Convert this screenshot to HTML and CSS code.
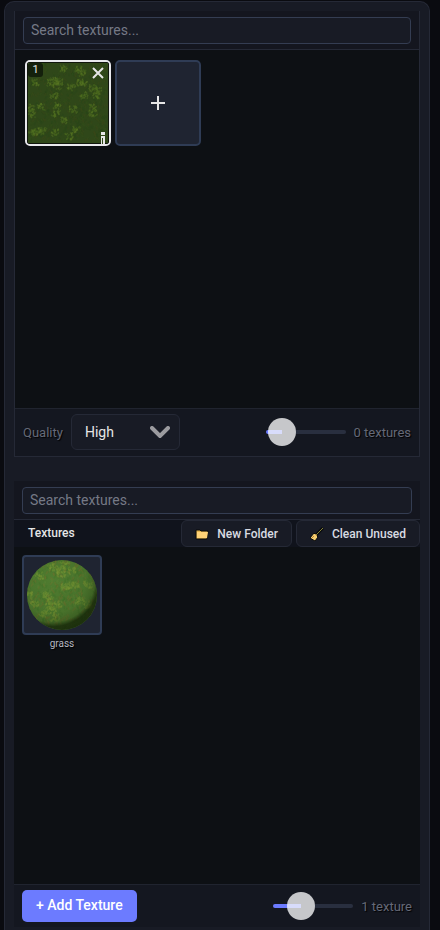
FILE: index.html
```html
<!DOCTYPE html>
<html lang="en">
<head>
    <meta charset="UTF-8">
    <meta name="viewport" content="width=device-width, initial-scale=1.0">
    <title>Textures</title>
    <link rel="stylesheet" href="styles.css">
</head>
<body>
    <main class="panel">
        <section class="browser framed">
            <div class="search-bar">
                <input class="search" type="text" placeholder="Search textures..." aria-label="Search terrain textures">
            </div>
            <div class="tiles">
                <div class="tile selected">
                    <svg class="grass" id="grass-tile" viewBox="0 0 86 86" aria-hidden="true">
                        <rect width="86" height="86" fill="#2f4719"/>
                        <g class="tufts"></g>
                    </svg>
                    <span class="badge">1</span>
                    <button class="remove" aria-label="Remove texture">
                        <svg viewBox="0 0 12 12" width="12" height="12"><path d="M1 1L11 11M11 1L1 11" stroke="#e6e6e6" stroke-width="2"/></svg>
                    </button>
                    <svg class="info" viewBox="0 0 6 14" width="6" height="14" aria-hidden="true">
                        <path d="M1 0h4v3h-4zM1 4h4v10h-4z" fill="#e8e8e8"/>
                        <path d="M2 6h1v8h-1z" fill="#2f4719"/>
                    </svg>
                </div>
                <button class="tile add" aria-label="Add texture slot">
                    <svg viewBox="0 0 14 14" width="14" height="14"><path d="M7 0V14M0 7H14" stroke="#e6e6e6" stroke-width="2"/></svg>
                </button>
            </div>
            <div class="footer">
                <label class="muted" for="quality">Quality</label>
                <div class="select-wrap">
                    <select class="quality" id="quality">
                        <option>Low</option>
                        <option>Medium</option>
                        <option selected>High</option>
                    </select>
                    <svg class="chevron" viewBox="0 0 20 12" width="20" height="12" aria-hidden="true"><path d="M2 2L10 10L18 2" fill="none" stroke="#9b9b9f" stroke-width="4" stroke-linecap="round"/></svg>
                </div>
                <input class="size low" type="range" min="0" max="100" value="4" aria-label="Tile size">
                <span class="muted">0 textures</span>
            </div>
        </section>

        <section class="browser">
            <div class="search-bar">
                <input class="search" type="text" placeholder="Search textures..." aria-label="Search texture library">
            </div>
            <div class="toolbar">
                <h2 class="title">Textures</h2>
                <button class="tool">
                    <svg viewBox="0 0 14 12" width="14" height="12" aria-hidden="true">
                        <path d="M1 2h4l1 1h7l-1 8h-11z" fill="#e8b64c" stroke="#080a0c" stroke-width="1"/>
                        <path d="M2 4h11l-1 6h-10z" fill="#ffd277"/>
                    </svg>
                    New Folder
                </button>
                <button class="tool">
                    <svg viewBox="0 0 14 14" width="14" height="14" aria-hidden="true">
                        <path d="M6 8L13 1" stroke="#080a0c" stroke-width="3"/>
                        <path d="M6 8L13 1" stroke="#85823a" stroke-width="1"/>
                        <path d="M4 6l4 4-3 4-5-3z" fill="#f6cf72" stroke="#080a0c" stroke-width="1"/>
                        <path d="M2 11l2-2M5 7l2 2" stroke="#b98634" stroke-width="1"/>
                    </svg>
                    Clean Unused
                </button>
            </div>
            <div class="tiles library">
                <figure class="item">
                    <div class="thumb">
                        <svg class="ball" id="grass-ball" viewBox="0 0 70 70" width="70" height="70" aria-hidden="true">
                            <defs>
                                <clipPath id="round"><circle cx="35" cy="35" r="35"/></clipPath>
                                <radialGradient id="shade" cx="0.36" cy="0.28" r="0.8">
                                    <stop offset="0" stop-color="#0a1400" stop-opacity="0"/>
                                    <stop offset="0.6" stop-color="#0a1400" stop-opacity="0.1"/>
                                    <stop offset="0.76" stop-color="#0a1400" stop-opacity="0.25"/>
                                    <stop offset="0.84" stop-color="#0a1400" stop-opacity="0.7"/>
                                    <stop offset="1" stop-color="#0a1400" stop-opacity="0.75"/>
                                </radialGradient>
                            </defs>
                            <g clip-path="url(#round)">
                                <rect width="70" height="70" fill="#4f7c30"/>
                                <g class="tufts"></g>
                                <rect width="70" height="70" fill="url(#shade)"/>
                            </g>
                        </svg>
                    </div>
                    <figcaption class="caption">grass</figcaption>
                </figure>
            </div>
            <div class="footer">
                <button class="primary">+ Add Texture</button>
                <input class="size mid" type="range" min="0" max="100" value="27" aria-label="Thumbnail size">
                <span class="muted">1 texture</span>
            </div>
        </section>
    </main>

    <script src="script.js"></script>
</body>
</html>
```
FILE: styles.css
```css
* {
    box-sizing: border-box;
}

body {
    margin: 0;
    height: 100vh;
    overflow: hidden;
    background-color: #0a0b10;
    color: #e6e6e6;
    font-family: Roboto, 'Liberation Sans', sans-serif;
    font-size: 14px;
}

button, input, select {
    font-family: inherit;
}

button {
    cursor: pointer;
}

.panel {
    display: flex;
    flex-direction: column;
    gap: 24px;
    height: 100vh;
    margin: 1px 10px 0 4px;
    padding: 9px 9px 4px;
    border: 1px solid #252936;
    border-bottom: none;
    border-radius: 10px 10px 0 0;
    background-color: #181b25;
}

.browser {
    display: flex;
    flex-direction: column;
    flex: 1 1 50%;
    min-height: 0;
    background-color: #0d1014;
}

.framed {
    border: 1px solid #252936;
    border-top: none;
}

.search-bar {
    padding: 6px 8px 5px;
    border-bottom: 1px solid #252936;
    background-color: #14161f;
}

.search {
    display: block;
    width: 100%;
    height: 27px;
    padding: 0 7px 1px;
    border: 1px solid #343d52;
    border-radius: 4px;
    background-color: #181b25;
    color: #e6e6e6;
    font-size: 14px;
}

.search::placeholder {
    color: #757986;
}

.tiles {
    display: flex;
    align-items: flex-start;
    flex: 1;
    gap: 4px;
    padding: 10px;
}

.tile {
    position: relative;
    display: flex;
    align-items: center;
    justify-content: center;
    width: 86px;
    height: 86px;
    padding: 0;
    border: 2px solid #2f3c55;
    border-radius: 5px;
    background-color: #1f2431;
}

.selected {
    overflow: hidden;
    border-color: #e8e8ec;
}

.grass {
    width: 100%;
    height: 100%;
    border: 1px solid #10160c;
}

.badge {
    position: absolute;
    top: 1px;
    left: 1px;
    width: 15px;
    border-radius: 3px;
    background-color: #14200c;
    font-size: 11px;
    line-height: 14px;
    text-align: center;
}

.remove {
    position: absolute;
    top: 5px;
    right: 5px;
    display: flex;
    padding: 0;
    border: none;
    background: none;
}

.info {
    position: absolute;
    right: 3px;
    bottom: -2px;
}

.footer {
    display: flex;
    align-items: center;
    gap: 8px;
    padding: 5px 8px;
    border-top: 1px solid #20242f;
    background-color: #141720;
}

.framed .footer {
    padding-bottom: 6px;
}

.muted {
    color: #656977;
    font-size: 13px;
    text-shadow: 1px 1px 1px #000;
}

.select-wrap {
    position: relative;
}

.quality {
    display: block;
    width: 109px;
    height: 36px;
    padding: 0 13px 1px;
    border: 1px solid #252936;
    border-radius: 6px;
    background-color: #181b25;
    color: #e6e6e6;
    font-size: 14px;
    appearance: none;
}

.chevron {
    position: absolute;
    top: 12px;
    right: 10px;
    pointer-events: none;
}

.size {
    width: 80px;
    height: 28px;
    margin: 0 0 0 auto;
    background: none;
    appearance: none;
}

.size::-webkit-slider-runnable-track {
    height: 4px;
    border-radius: 2px;
    background: linear-gradient(to right, #6c7bff 35%, #292f3f 35%);
}

.low::-webkit-slider-runnable-track {
    background: linear-gradient(to right, #6c7bff 20%, #292f3f 20%);
}

.size::-webkit-slider-thumb {
    width: 28px;
    height: 28px;
    margin-top: -12px;
    border-radius: 50%;
    background: linear-gradient(#d8dcfb, #d8dcfb) 0 12px / 14px 4px no-repeat #c6c7ca;
    appearance: none;
}

.toolbar {
    display: flex;
    gap: 4px;
    background-color: #10131c;
}

.title {
    flex: 1;
    margin: 0;
    padding-left: 14px;
    font-size: 12px;
    font-weight: 500;
    line-height: 27px;
}

.tool {
    display: flex;
    align-items: center;
    gap: 8px;
    height: 27px;
    padding: 0 13px;
    border: 1px solid #252936;
    border-radius: 6px;
    background-color: #181b25;
    color: #d9dbe2;
    font-size: 12px;
    font-weight: 500;
}

.library {
    padding: 8px;
}

.item {
    width: 80px;
    margin: 0;
}

.thumb {
    display: flex;
    align-items: center;
    justify-content: center;
    height: 80px;
    border: 2px solid #2f3c55;
    border-radius: 4px;
    background-color: #1f2431;
}

.caption {
    margin-top: 2px;
    color: #b4b7c1;
    font-size: 10px;
    line-height: 14px;
    text-align: center;
    text-shadow: 1px 1px 1px #000;
}

.primary {
    height: 32px;
    padding: 0 14px 2px;
    border: none;
    border-radius: 5px;
    background-color: #6c7bff;
    color: #fff;
    font-size: 14px;
    font-weight: 500;
}
```
FILE: script.js
```js
const SVG_NS = 'http://www.w3.org/2000/svg';

const tilePatches = [
    [38, 5], [55, 5], [28, 18], [31, 24], [8, 20], [46, 25], [60, 22], [70, 26],
    [73, 34], [28, 34], [60, 34], [32, 45], [15, 46], [3, 47], [48, 49], [70, 47],
    [30, 54], [4, 54], [70, 53], [39, 61], [5, 74], [15, 72], [29, 74], [52, 71],
    [44, 78], [58, 10], [24, 20], [33, 19], [56, 20], [75, 29], [10, 73]
];

const ballPatches = [
    [25, 6], [38, 5], [35, 13], [45, 10], [38, 25], [49, 24], [20, 34], [23, 40],
    [8, 42], [31, 44], [17, 53], [28, 57], [53, 40], [61, 24], [3, 34], [61, 44], [13, 15],
    [43, 25], [22, 46], [26, 49], [33, 8]
];

// repeatable noise, so the texture looks the same on every load
let seed = 7;
function random() {
    seed = (seed * 16807) % 2147483647;
    return seed / 2147483647;
}

function blade(group, x, y, length, color, opacity) {
    const path = document.createElementNS(SVG_NS, 'path');
    const dx = (random() - 0.5) * length * 2;
    path.setAttribute('d', `M${x} ${y}l${dx} ${-length}`);
    path.setAttribute('stroke', color);
    path.setAttribute('stroke-opacity', opacity);
    path.setAttribute('stroke-width', 1.5);
    group.appendChild(path);
}

function drawGrass(id, size, patches, base, light) {
    const group = document.querySelector(`#${id} .tufts`);
    for (let i = 0; i < 600; i++) {
        blade(group, random() * size, random() * size, 3, base[i % base.length], 0.35);
    }
    patches.forEach(([x, y]) => {
        for (let i = 0; i < 20; i++) {
            blade(group, x + (random() - 0.5) * 8, y + 2 + (random() - 0.5) * 7, 2, light[i % light.length], 0.45);
        }
    });
}

drawGrass('grass-tile', 86, tilePatches, ['#26451a', '#40491a', '#354f1b'], ['#5d7a25', '#4c6c20']);
drawGrass('grass-ball', 70, ballPatches, ['#3f7428', '#77702d', '#5d8436'], ['#7f9c37', '#6f9234']);
```
